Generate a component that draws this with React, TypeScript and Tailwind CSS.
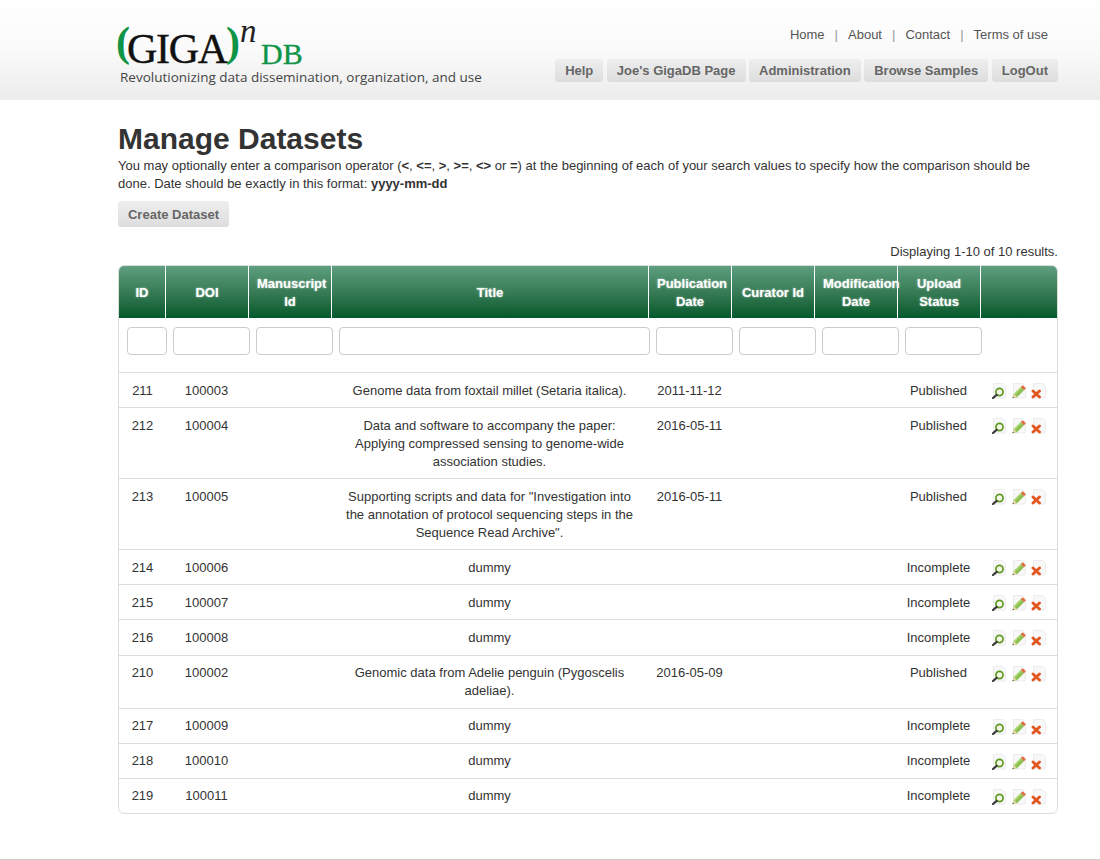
const rows = [
  { id: "211", doi: "100003", title: "Genome data from foxtail millet (Setaria italica).", date: "2011-11-12", status: "Published" },
  { id: "212", doi: "100004", title: "Data and software to accompany the paper: Applying compressed sensing to genome-wide association studies.", date: "2016-05-11", status: "Published" },
  { id: "213", doi: "100005", title: 'Supporting scripts and data for "Investigation into the annotation of protocol sequencing steps in the Sequence Read Archive".', date: "2016-05-11", status: "Published" },
  { id: "214", doi: "100006", title: "dummy", date: "", status: "Incomplete" },
  { id: "215", doi: "100007", title: "dummy", date: "", status: "Incomplete" },
  { id: "216", doi: "100008", title: "dummy", date: "", status: "Incomplete" },
  { id: "210", doi: "100002", title: "Genomic data from Adelie penguin (Pygoscelis adeliae).", date: "2016-05-09", status: "Published" },
  { id: "217", doi: "100009", title: "dummy", date: "", status: "Incomplete" },
  { id: "218", doi: "100010", title: "dummy", date: "", status: "Incomplete" },
  { id: "219", doi: "100011", title: "dummy", date: "", status: "Incomplete" },
];

const Page = () => (
  <path d="M2.500 0.500h9l3 3v10a1.500 1.500 0 0 1-1.500 1.500H4a1.500 1.500 0 0 1-1.500-1.500z" fill="#f8f8f8" stroke="#ececec" />
);

const ViewIcon = () => (
  <svg width="16" height="16" viewBox="0 0 16 16">
    <Page />
    <circle cx="8.500" cy="9" r="3.600" fill="#f3f8e6" stroke="#5f9a22" strokeWidth="1.700" />
    <path d="M5.700 11.900 2 15" stroke="#3a3a3a" strokeWidth="2.200" strokeLinecap="round" />
  </svg>
);

const EditIcon = () => (
  <svg width="16" height="16" viewBox="0 0 16 16">
    <Page />
    <path d="M1.500 15.200 2.800 11 9.800 4 13 7.200 6 14.200z" fill="#8cc152" />
    <path d="M2.800 11 9.800 4 10.800 5 3.800 12z" fill="#b5dc7c" />
    <path d="M9.800 4 11.800 2.200 14.800 5.300 13 7.200z" fill="#dd6b3f" />
    <path d="M1.500 15.200 2.800 11 6 14.200z" fill="#ead9ae" />
    <path d="M1.500 15.200 2 13.600 3.100 14.700z" fill="#444" />
  </svg>
);

const DeleteIcon = () => (
  <svg width="16" height="16" viewBox="0 0 16 16">
    <Page />
    <path d="M2 8 8.500 14M8.500 8 2 14" stroke="#e2571f" strokeWidth="2.900" strokeLinecap="round" />
  </svg>
);

const GREEN = "#0e9347";
const SERIF = "'Liberation Serif', serif";

const Logo = () => (
  <svg width="210" height="76" viewBox="108 0 210 76" className="-mb-[8px] -ml-[10px] block">
    <text x="116" y="56" fontFamily={SERIF} fontWeight="bold" fontSize="42" fill={GREEN}>(</text>
    <text x="127" y="63" fontFamily={SERIF} fontSize="42" fill="#111" stroke="#111" strokeWidth="0.400" letterSpacing="-1.300">GIGA</text>
    <text x="226" y="56" fontFamily={SERIF} fontWeight="bold" fontSize="42" fill={GREEN}>)</text>
    <text x="240" y="42" fontFamily={SERIF} fontStyle="italic" fontSize="33" fill="#222">n</text>
    <text x="261" y="64" fontFamily={SERIF} fontSize="30" fill={GREEN} stroke={GREEN} strokeWidth="0.300">DB</text>
  </svg>
);

const NavButton = ({ label }: { label: string }) => (
  <a className="flex h-[23px] items-center rounded-[3px] bg-gradient-to-b from-[#eeeeee] to-[#dddddd] px-[10px] text-[13px] font-bold text-[#666666]">
    {label}
  </a>
);

const Sep = () => <span className="mx-[10px] text-[#999999]">|</span>;

const thClass =
  "border-r border-white px-[8px] pt-[9px] pb-[7px] text-center align-middle text-[13px] font-bold leading-[18px] text-white [text-shadow:0_0_2px_rgba(255,255,255,0.7)]";
const tdBase = "border-t border-[#dddddd] text-center align-top text-[13px] leading-[18px] text-[#333333]";
const tdSide = "pl-[7px] pr-[9px]";
const inputClass = "block h-[28px] rounded-[4px] border border-[#cccccc] bg-white";

// The reference's row heights are fractional; rows round to 35px with the text
// one pixel lower above row 216, and row 216 comes out at 36px.
const padFor = (index: number) => {
  if (index < 5) return "pt-[9px] pb-[7px]";
  if (index === 5) return "pt-[9px] pb-[8px]";
  return "pt-[8px] pb-[8px]";
};

export default function App() {
  return (
    <div className="relative h-[860px] overflow-hidden bg-white font-['Liberation_Sans',Arial,sans-serif] text-[13px] leading-[18px] text-[#333333]">
      <header className="flex h-[100px] justify-between bg-gradient-to-b from-[#ffffff] via-[#fafafa] to-[#ececec] pl-[118px] pr-[42px]">
        <div>
          <Logo />
          <p className="ml-[2px] font-['Open_Sans',sans-serif] text-[13.5px] leading-[18px] text-[#444444]">
            Revolutionizing data dissemination, organization, and use
          </p>
        </div>
        <div className="flex flex-col items-end pt-[26px]">
          <nav className="flex pr-[10px] text-[#555555]">
            <a>Home</a>
            <Sep />
            <a>About</a>
            <Sep />
            <a>Contact</a>
            <Sep />
            <a>Terms of use</a>
          </nav>
          <div className="mt-[15px] flex gap-[3.5px]">
            <NavButton label="Help" />
            <NavButton label="Joe's GigaDB Page" />
            <NavButton label="Administration" />
            <NavButton label="Browse Samples" />
            <NavButton label="LogOut" />
          </div>
        </div>
      </header>

      <main className="ml-[118px] w-[940px]">
        <h1 className="mt-[21px] text-[30px] font-bold leading-[36px] text-[#333333]">Manage Datasets</h1>
        <p className="text-[13px] leading-[18px]">
          You may optionally enter a comparison operator (<b>&lt;</b>, <b>&lt;=</b>, <b>&gt;</b>, <b>&gt;=</b>, <b>&lt;&gt;</b> or <b>=</b>) at the beginning of each of your search values to specify how the comparison should be done. Date should be exactly in this format: <b>yyyy-mm-dd</b>
        </p>
        <a className="mt-[8px] flex h-[26px] w-[111px] items-center justify-center rounded-[3px] bg-gradient-to-b from-[#eeeeee] to-[#dddddd] pt-[1px] text-[13px] font-bold text-[#666666]">
          Create Dataset
        </a>
        <div className="mt-[16px] text-right text-[13px] leading-[18px]">Displaying 1-10 of 10 results.</div>
        <div className="mt-[4px] rounded-[6px] border border-[#dddddd]">
          <table className="w-[938px] table-fixed border-separate border-spacing-0">
            <colgroup>
              <col className="w-[47px]" />
              <col className="w-[83px]" />
              <col className="w-[83px]" />
              <col className="w-[317px]" />
              <col className="w-[83px]" />
              <col className="w-[83px]" />
              <col className="w-[83px]" />
              <col className="w-[83px]" />
              <col className="w-[76px]" />
            </colgroup>
            <thead className="bg-gradient-to-b from-[#5f9f80] to-[#00592c]">
              <tr>
                <th className={`${thClass} rounded-tl-[5px]`}>ID</th>
                <th className={thClass}>DOI</th>
                <th className={thClass}>
                  Manuscript
                  <br />
                  Id
                </th>
                <th className={thClass}>Title</th>
                <th className={thClass}>
                  Publication
                  <br />
                  Date
                </th>
                <th className={thClass}>Curator Id</th>
                <th className={thClass}>
                  Modification
                  <br />
                  Date
                </th>
                <th className={thClass}>
                  Upload
                  <br />
                  Status
                </th>
                <th className="rounded-tr-[5px] p-0"></th>
              </tr>
            </thead>
            <tbody>
              <tr>
                <td className="pb-[17px] pl-[8px] pt-[9px]"><input className={`${inputClass} w-[40px]`} /></td>
                <td className="pb-[17px] pl-[7px] pt-[9px]"><input className={`${inputClass} w-[77px]`} /></td>
                <td className="pb-[17px] pl-[7px] pt-[9px]"><input className={`${inputClass} w-[77px]`} /></td>
                <td className="pb-[17px] pl-[7px] pt-[9px]"><input className={`${inputClass} w-[311px]`} /></td>
                <td className="pb-[17px] pl-[7px] pt-[9px]"><input className={`${inputClass} w-[77px]`} /></td>
                <td className="pb-[17px] pl-[7px] pt-[9px]"><input className={`${inputClass} w-[77px]`} /></td>
                <td className="pb-[17px] pl-[7px] pt-[9px]"><input className={`${inputClass} w-[77px]`} /></td>
                <td className="pb-[17px] pl-[7px] pt-[9px]"><input className={`${inputClass} w-[77px]`} /></td>
                <td></td>
              </tr>
              {rows.map((r, i) => {
                const td = `${tdBase} ${tdSide} ${padFor(i)}`;
                return (
                  <tr key={r.id}>
                    <td className={`${tdBase} ${padFor(i)} px-[8px]`}>{r.id}</td>
                    <td className={td}>{r.doi}</td>
                    <td className={td}></td>
                    <td className={td}>{r.title}</td>
                    <td className={td}>{r.date}</td>
                    <td className={td}></td>
                    <td className={td}></td>
                    <td className={td}>{r.status}</td>
                    <td className="border-t border-[#dddddd] pl-[10px] pt-[10px] align-top">
                      <div className="flex gap-[4px]">
                        <ViewIcon />
                        <EditIcon />
                        <DeleteIcon />
                      </div>
                    </td>
                  </tr>
                );
              })}
            </tbody>
          </table>
        </div>
      </main>
      <div className="mt-[45px] border-t border-[#cccccc]"></div>
    </div>
  );
}
